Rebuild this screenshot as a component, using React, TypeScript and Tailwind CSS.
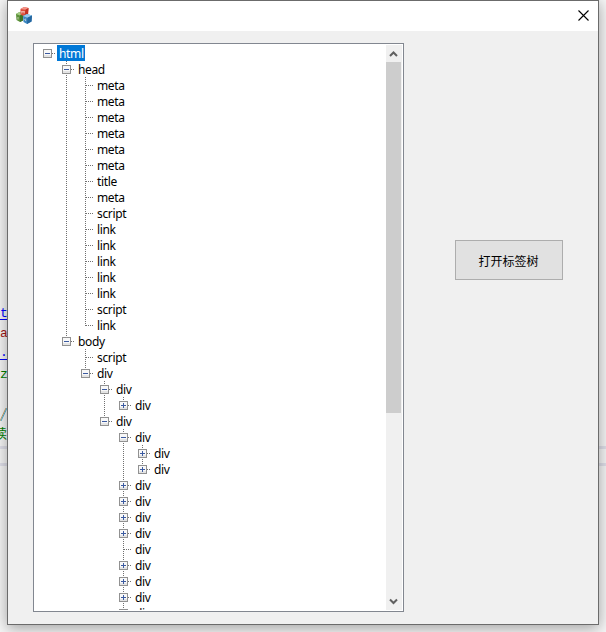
import React from "react";

type Node = { name: string; closed?: boolean; selected?: boolean; children?: Node[] };

const leaf = (name: string): Node => ({ name });
const folded = (): Node => ({ name: "div", closed: true });

const tree: Node = {
  name: "html",
  selected: true,
  children: [
    {
      name: "head",
      children: [
        "meta", "meta", "meta", "meta", "meta", "meta", "title", "meta",
        "script", "link", "link", "link", "link", "link", "script", "link",
      ].map(leaf),
    },
    {
      name: "body",
      children: [
        leaf("script"),
        {
          name: "div",
          children: [
            { name: "div", children: [folded()] },
            {
              name: "div",
              children: [
                { name: "div", children: [folded(), folded()] },
                folded(), folded(), folded(), folded(),
                leaf("div"),
                folded(), folded(), folded(), folded(),
              ],
            },
          ],
        },
      ],
    },
  ],
};

function Guide({ show }: { show: boolean }) {
  return (
    <svg className="h-4 w-[19px] shrink-0" viewBox="0 0 19 16" shapeRendering="crispEdges">
      {show && <path d="M9.5 0V16" stroke="#707070" strokeDasharray="1 1" />}
    </svg>
  );
}

function Joint({ node, root, last }: { node: Node; root: boolean; last: boolean }) {
  const hasBox = !!node.children || !!node.closed;
  return (
    <svg className="h-4 w-[19px] shrink-0" viewBox="0 0 19 16" shapeRendering="crispEdges" fill="none">
      {!root && <path d={last ? "M9.5 0V9" : "M9.5 0V16"} stroke="#707070" strokeDasharray="1 1" />}
      <path d="M9 8.5H18" stroke="#707070" strokeDasharray="1 1" strokeDashoffset="1" />
      {hasBox && (
        <>
          <rect x="5.5" y="4.5" width="8" height="8" fill="#f8f8f8" stroke="#919191" />
          <path d="M6 10.5H13M6 11.5H13" stroke="#e4e4e4" />
          <path d="M7 8.5H12" stroke="#3b5aa0" />
          {node.closed && <path d="M9.5 6V11" stroke="#3b5aa0" />}
        </>
      )}
    </svg>
  );
}

function Branch({ node, guides, last }: { node: Node; guides: boolean[]; last: boolean }) {
  const root = guides.length === 0;
  return (
    <li>
      <div className="flex h-4 items-center">
        {guides.map((g, i) => <Guide key={i} show={g} />)}
        <Joint node={node} root={root} last={last} />
        <span
          className={
            "h-4 pr-[1.5px] pl-0.5 leading-[18px] tracking-[-0.35px] whitespace-nowrap " +
            (node.selected ? "bg-[#0078d7] text-white" : "text-black")
          }
        >
          {node.name}
        </span>
      </div>
      {node.children && (
        <ul>
          {node.children.map((c, i) => (
            <Branch
              key={i}
              node={c}
              guides={[...guides, !root && !last]}
              last={i === node.children!.length - 1}
            />
          ))}
        </ul>
      )}
    </li>
  );
}

function Cubes() {
  return (
    <svg className="h-[17px] w-4" viewBox="0 0 16 17">
      <path d="M0 7L3.5 5L7 6.5V13.5L4 15L0.5 13Z" fill="#5b9139" />
      <path d="M0 7L3.5 5L7 6.5L4 8.5Z" fill="#a5cc85" />
      <path d="M4 8.5L7 6.5V13.5L4 15Z" fill="#3f7426" />
      <path d="M4.5 2L8 0L12.5 1L12 7.5L8.5 9.5L4.5 7.5Z" fill="#dd4c3a" />
      <path d="M4.5 2L8 0L12.5 1L9.5 2.8Z" fill="#f2958a" />
      <path d="M9.5 2.8L12.5 1L12 7.5L8.5 9.5Z" fill="#c23024" />
      <path d="M7 9L11 7L16 8.5L15.5 14.5L11 17L7.5 15Z" fill="#3d88c2" />
      <path d="M7 9L11 7L16 8.5L11.5 10.8Z" fill="#9bcbec" />
      <path d="M11.5 10.8L16 8.5L15.5 14.5L11 17Z" fill="#25669f" />
      <path d="M5.8 6.5V4L7 5.3L8.2 4V6.5M2 10V12.5M10 12L8.7 12.5L10 14" stroke="#f3e5df" strokeWidth=".7" fill="none" />
    </svg>
  );
}

export default function App() {
  return (
    <div className="relative h-[632px] w-[606px] overflow-hidden bg-[#f6f6f6] font-['Noto_Sans','Noto_Sans_CJK_SC',sans-serif] text-xs">
      <div className="flex h-[445px] flex-col pt-[304px] font-['Liberation_Mono','Noto_Sans_CJK_SC',monospace] text-[13px] leading-5">
        <span className="h-4 w-2 border-b border-[#0000ff] leading-[19px] text-[#0000ff]">t</span>
        <span className="mt-1 h-5 text-[#a31515]">a</span>
        <span className="h-4 w-2 border-b border-[#0000ff] leading-[18px] text-[#0000ff]">.</span>
        <span className="mt-[5px] h-5 text-[#008000]">z</span>
        <svg className="mt-5 h-5 w-2 shrink-0" viewBox="0 0 8 20"><path d="M0 16L6 3" stroke="#d0a060" fill="none" /><path d="M1 16L7 3" stroke="#50b0d8" fill="none" /></svg>
        <span className="-ml-1.5 h-5 whitespace-nowrap text-[#008000]">续</span>
      </div>
      <div className="mt-px h-[3px] bg-[#e0e0ea]" />
      <div className="mt-3.5 h-[3px] bg-[#e0e0ea]" />

      <main className="absolute top-0 left-[7px] flex h-[625px] w-[592px] flex-col border border-[#6b6b6b] bg-[#f0f0f0] shadow-[0_3px_14px_rgba(0,0,0,0.36)]">
        <header className="flex h-[30px] shrink-0 items-start justify-between bg-white pt-[6px] pr-[9px] pl-2">
          <Cubes />
          <svg className="mt-[3px] h-[11px] w-[11px]" viewBox="0 0 11 11"><path d="M.5 .5L10.5 10.5M10.5 .5L.5 10.5" stroke="#000" strokeWidth="1.1" /></svg>
        </header>
        <div className="flex items-start">
          <section className="mt-3 ml-[25px] flex h-[569px] w-[371px] border border-[#828790] bg-white p-px">
            <div className="h-[565px] flex-1 overflow-hidden pl-[3px]">
              <ul><Branch node={tree} guides={[]} last /></ul>
            </div>
            <div className="flex w-4 flex-col items-start bg-[#f0f0f0]">
              <svg className="h-[17px] w-[15px] shrink-0" viewBox="0 0 15 17"><path d="M4 11L7.5 7.5L11 11" stroke="#606060" strokeWidth="2" fill="none" /></svg>
              <div className="h-[351px] w-[15px] bg-[#cdcdcd]" />
              <svg className="mt-auto h-[17px] w-[15px] shrink-0" viewBox="0 0 15 17"><path d="M4 6.5L7.5 10L11 6.5" stroke="#606060" strokeWidth="2" fill="none" /></svg>
            </div>
          </section>
          <button className="mt-[209px] ml-[51px] h-10 w-[108px] border border-[#adadad] bg-[#e1e1e1] pt-0.5 pr-px font-['Noto_Sans_CJK_SC',sans-serif] text-xs text-black">打开标签树</button>
        </div>
      </main>
    </div>
  );
}
